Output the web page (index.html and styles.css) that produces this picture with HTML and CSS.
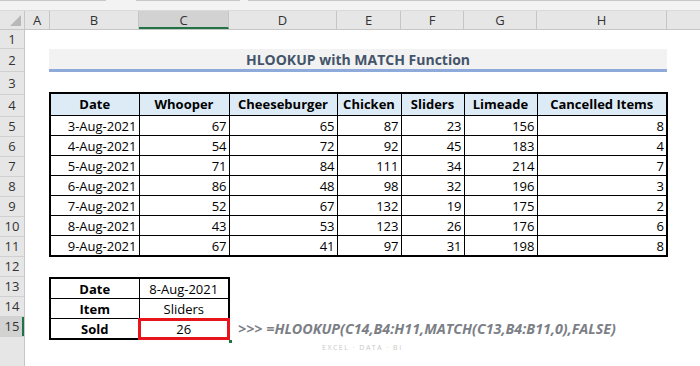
FILE: index.html
```html
<!DOCTYPE html>
<html lang="en">
<head>
  <meta charset="UTF-8" />
  <title>HLOOKUP with MATCH Function</title>
  <link rel="stylesheet" href="styles.css">
</head>
<body>
  <div class="top-strip">
    <span class="tab tab-1"></span>
    <span class="tab tab-2"></span>
    <span class="tab tab-3"></span>
  </div>

  <div class="sheet">
    <div class="corner"><span class="corner-tri"></span></div>

    <div class="col-headers">
      <div class="ch w-a">A</div>
      <div class="ch w-b">B</div>
      <div class="ch w-c selected">C</div>
      <div class="ch w-d">D</div>
      <div class="ch w-e">E</div>
      <div class="ch w-f">F</div>
      <div class="ch w-g">G</div>
      <div class="ch w-h">H</div>
      <div class="ch w-i"></div>
    </div>

    <div class="row-headers">
      <div class="rh h-19">1</div>
      <div class="rh h-23">2</div>
      <div class="rh h-23">3</div>
      <div class="rh h-22">4</div>
      <div class="rh">5</div>
      <div class="rh">6</div>
      <div class="rh">7</div>
      <div class="rh">8</div>
      <div class="rh">9</div>
      <div class="rh">10</div>
      <div class="rh">11</div>
      <div class="rh">12</div>
      <div class="rh">13</div>
      <div class="rh">14</div>
      <div class="rh selected">15</div>
      <div class="rh rest"></div>
    </div>

    <div class="cells">
      <div class="spacer h-19"></div>

      <div class="title">HLOOKUP with MATCH Function</div>

      <div class="spacer h-20"></div>

      <table class="data-table">
        <colgroup>
          <col class="w-b"><col class="w-c"><col class="w-d"><col class="w-e">
          <col class="w-f"><col class="w-g"><col class="w-h">
        </colgroup>
        <thead>
          <tr>
            <th>Date</th>
            <th>Whooper</th>
            <th>Cheeseburger</th>
            <th>Chicken</th>
            <th>Sliders</th>
            <th>Limeade</th>
            <th>Cancelled Items</th>
          </tr>
        </thead>
        <tbody>
          <tr><td>3-Aug-2021</td><td>67</td><td>65</td><td>87</td><td>23</td><td>156</td><td>8</td></tr>
          <tr><td>4-Aug-2021</td><td>54</td><td>72</td><td>92</td><td>45</td><td>183</td><td>4</td></tr>
          <tr><td>5-Aug-2021</td><td>71</td><td>84</td><td>111</td><td>34</td><td>214</td><td>7</td></tr>
          <tr><td>6-Aug-2021</td><td>86</td><td>48</td><td>98</td><td>32</td><td>196</td><td>3</td></tr>
          <tr><td>7-Aug-2021</td><td>52</td><td>67</td><td>132</td><td>19</td><td>175</td><td>2</td></tr>
          <tr><td>8-Aug-2021</td><td>43</td><td>53</td><td>123</td><td>26</td><td>176</td><td>6</td></tr>
          <tr><td>9-Aug-2021</td><td>67</td><td>41</td><td>97</td><td>31</td><td>198</td><td>8</td></tr>
        </tbody>
      </table>

      <div class="spacer h-20"></div>

      <div class="lookup-row">
        <table class="lookup-table">
          <colgroup><col class="w-b"><col class="w-c"></colgroup>
          <tr><th>Date</th><td>8-Aug-2021</td></tr>
          <tr><th>Item</th><td>Sliders</td></tr>
          <tr><th>Sold</th><td class="result">26</td></tr>
        </table>
        <span class="fill-handle"></span>
        <div class="formula">&gt;&gt;&gt; =HLOOKUP(C14,B4:H11,MATCH(C13,B4:B11,0),FALSE)</div>
        <span class="wm-tag">EXCEL · DATA · BI</span>
      </div>
    </div>
  </div>
</body>
</html>
```

FILE: styles.css
```css
body {
  margin: 0;
  width: 700px;
  height: 366px;
  overflow: hidden;
  background: #ffffff;
  font-family: 'Open Sans', sans-serif;
  color: #000000;
}

.top-strip {
  height: 10px;
  background: #f3f3f3;
  border-bottom: 1px solid #dadada;
  position: relative;
}

.tab {
  position: absolute;
  top: 0;
  height: 1px;
  background: #c8c8c8;
}

.tab-1 { left: 0; width: 106px; }
.tab-2 { left: 136px; width: 104px; }
.tab-3 { left: 248px; width: 452px; }

.sheet {
  display: grid;
  grid-template-columns: 25px 1fr;
  grid-template-rows: 19px 336px;
}

.corner {
  background: #e6e6e6;
  border-right: 1px solid #c6c6c6;
  border-bottom: 1px solid #c6c6c6;
  box-sizing: border-box;
  position: relative;
}

.corner-tri {
  position: absolute;
  right: 3px;
  bottom: 3px;
  width: 0;
  height: 0;
  border-left: 11px solid transparent;
  border-bottom: 11px solid #b8b8b8;
}

.col-headers {
  display: flex;
  background: #e6e6e6;
  border-bottom: 1px solid #c6c6c6;
  box-sizing: border-box;
}

.ch {
  flex: none;
  box-sizing: border-box;
  border-right: 1px solid #c6c6c6;
  font-size: 13px;
  line-height: 18px;
  text-align: center;
  color: #333333;
}

.ch.selected {
  background: #d2d2d2;
  border-bottom: 2px solid #217346;
}

.ch.w-i { border-right: none; flex: 1; }

.w-a { width: 25px; }
.w-b { width: 89px; }
.w-c { width: 90px; }
.w-d { width: 108px; }
.w-e { width: 64px; }
.w-f { width: 63px; }
.w-g { width: 73px; }
.w-h { width: 130px; }
.w-i { width: 33px; }

.row-headers {
  display: flex;
  flex-direction: column;
  background: #e6e6e6;
  border-right: 1px solid #c6c6c6;
  box-sizing: border-box;
}

.rh {
  flex: none;
  height: 20px;
  box-sizing: border-box;
  border-bottom: 1px solid #d0d0d0;
  font-size: 13px;
  line-height: 19px;
  text-align: center;
  color: #333333;
}

.rh.h-19 { height: 19px; line-height: 18px; }
.rh.h-23 { height: 23px; line-height: 22px; }
.rh.h-22 { height: 22px; line-height: 21px; }

.rh.selected {
  background: #d2d2d2;
  box-shadow: inset -2px 0 0 #217346;
}

.rh.rest { flex: 1; border-bottom: none; }

.cells {
  padding-left: 24px;
}

.spacer.h-19 { height: 19px; }
.spacer.h-20 { height: 20px; }

.title {
  width: 618px;
  height: 23px;
  box-sizing: border-box;
  background: #f2f2f2;
  border-bottom: 3px solid #8eaadb;
  font-size: 14px;
  font-weight: 700;
  line-height: 21px;
  text-align: center;
  color: #44546a;
}

table {
  border-collapse: collapse;
  table-layout: fixed;
  font-size: 13px;
}

.data-table {
  width: 619px;
  border: 2px solid #000000;
}

.data-table th,
.data-table td,
.lookup-table th,
.lookup-table td {
  border: 1px solid #000000;
  padding: 0 2px;
  white-space: nowrap;
  overflow: hidden;
}

.data-table th {
  height: 21px;
  background: #ddebf7;
  font-weight: 700;
  text-align: center;
  line-height: 19px;
}

.data-table td {
  height: 19px;
  text-align: right;
  line-height: 18px;
}

.lookup-row {
  display: flex;
  align-items: flex-end;
  position: relative;
}

.lookup-table {
  width: 181px;
  border: 2px solid #000000;
}

.lookup-table th,
.lookup-table td {
  height: 19px;
  line-height: 18px;
  text-align: center;
}

.lookup-table th { font-weight: 700; }

.lookup-table td.result {
  outline: 3px solid #e8141b;
  outline-offset: -2px;
}

.fill-handle {
  position: absolute;
  left: 180px;
  bottom: -3px;
  width: 3px;
  height: 3px;
  background: #217346;
}

.formula {
  margin-left: 8px;
  margin-bottom: 1px;
  font-size: 14.3px;
  font-weight: 700;
  font-style: italic;
  line-height: 20px;
  color: #7c7f86;
}

.wm-tag {
  position: absolute;
  left: 273px;
  bottom: -13px;
  font-size: 7px;
  letter-spacing: 1.5px;
  line-height: 10px;
  color: #c8c8c8;
}
```
